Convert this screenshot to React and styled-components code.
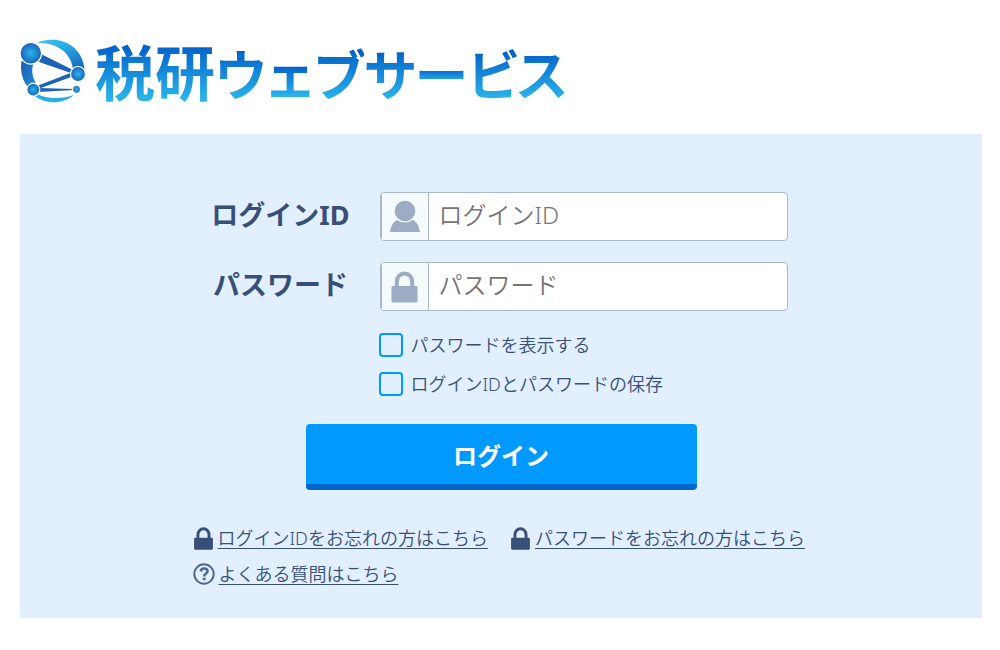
import React, { useState } from 'react';
import styled, { createGlobalStyle } from 'styled-components';

const GlobalStyle = createGlobalStyle`
  * {
    box-sizing: border-box;
  }

  body {
    margin: 0;
    background: #fff;
    color: #384f77;
    font-family: 'Noto Sans', 'Noto Sans CJK JP', sans-serif;
    font-size: 18px;
    font-weight: 350;
  }
`;

const Page = styled.div`
  padding: 32px 18px 32px 20px;
`;

const Header = styled.header`
  display: flex;
  align-items: center;
  gap: 9px;
  height: 78px;
  margin-bottom: 24px;
`;

const LogoText = styled.h1`
  margin: 0;
  font-family: 'Noto Sans CJK JP', sans-serif;
  font-size: 60px;
  font-weight: 700;
  line-height: 76px;
  font-feature-settings: 'palt';
  white-space: nowrap;
`;

const LogoChar = styled.span`
  font-size: ${(p) => (p.$kana ? 54 : 60)}px;
  color: transparent;
  background: linear-gradient(#0360c8 ${(p) => p.$from}%, #2ab4ea ${(p) => p.$to}%);
  background-clip: text;
  -webkit-background-clip: text;
`;

const Panel = styled.main`
  padding: 58px 20px 32px;
  background: #e1efff;
`;

const Fields = styled.div`
  display: grid;
  grid-template-columns: 140px 408px;
  gap: 21px 29px;
  align-items: center;
  max-width: 581px;
  margin: 0 auto;
`;

const FieldLabel = styled.label`
  padding-bottom: 4px;
  font-size: 27px;
  font-weight: 700;
  line-height: 40px;
  text-align: center;
  white-space: nowrap;
`;

const InputBox = styled.div`
  display: flex;
  height: 49px;
  border: 1px solid #a9b7d3;
  border-radius: 4px;
  background: #fff;
  overflow: hidden;
`;

const InputIcon = styled.span`
  display: flex;
  align-items: center;
  justify-content: center;
  flex: 0 0 48px;
  border: 1px solid #a9b7d3;
  border-width: 0 1px 0 1px;
  background: #f5faff;
`;

const Input = styled.input`
  flex: 1;
  min-width: 0;
  padding: 0 10px 4px;
  border: 0;
  outline: 0;
  background: transparent;
  color: #384f77;
  font-family: inherit;
  font-size: 24px;
  font-weight: inherit;

  &::placeholder {
    color: #757575;
    opacity: 1;
  }
`;

const Checks = styled.div`
  grid-column: 2;
  display: flex;
  flex-direction: column;
  gap: 15px;
  margin: 1px 0 0 -1px;
`;

const CheckLabel = styled.label`
  display: flex;
  align-items: center;
  gap: 8px;
  height: 24px;
  line-height: 24px;
`;

const Checkbox = styled.input`
  appearance: none;
  width: 24px;
  height: 24px;
  margin: 0;
  border: 2px solid #0099ff;
  border-radius: 4px;

  &:checked {
    background: #0099ff;
  }
`;

const LoginButton = styled.button`
  display: block;
  width: 100%;
  max-width: 391px;
  height: 66px;
  margin: 28px auto 0;
  padding: 0;
  border: 0;
  border-bottom: 6px solid #0066cc;
  border-radius: 4px;
  background: #0099ff;
  color: #fff;
  font-family: inherit;
  font-size: 24px;
  font-weight: 700;
`;

const Links = styled.div`
  display: flex;
  flex-wrap: wrap;
  gap: 12px 22px;
  max-width: 617px;
  margin: 36px auto 0;
`;

const LinkItem = styled.div`
  display: flex;
  align-items: center;
  gap: 4px;
  height: 24px;
`;

const TextLink = styled.a`
  color: #384f77;
  line-height: 24px;
  text-decoration: underline;
  text-decoration-thickness: 1px;
  text-underline-offset: 3px;
  white-space: nowrap;
`;

// each glyph carries its own gradient range
const logoChars = [
  ['税', 22, 84],
  ['研', 22, 84],
  ['ウ', 22, 84],
  ['ェ', 42, 80],
  ['ブ', 22, 84],
  ['サ', 22, 84],
  ['ー', 45, 62],
  ['ビ', 22, 84],
  ['ス', 22, 84],
];

function LogoMark() {
  return (
    <svg width="66" height="66" viewBox="0 0 66 66" aria-hidden="true">
      <defs>
        <radialGradient id="ball">
          <stop offset="0" stopColor="#27b4ea" />
          <stop offset="1" stopColor="#1a62b8" />
        </radialGradient>
        <linearGradient id="arc" x1="0" y1="0" x2="1" y2="1">
          <stop offset="0" stopColor="#38c4ef" />
          <stop offset="0.4" stopColor="#27aee8" />
          <stop offset="1" stopColor="#1a5fb5" />
        </linearGradient>
        <linearGradient id="side" x1="0" y1="0" x2="1" y2="1">
          <stop offset="0" stopColor="#1a5fb5" />
          <stop offset="1" stopColor="#2389d2" />
        </linearGradient>
      </defs>
      <path d="M17 5C37-4 62 6 64.500 31L53 31C51 15 37 4 17 5Z" fill="url(#arc)" />
      <path d="M1.500 23C0 32 2 41 7 48L16 45C12 39 11 31 14 24Z" fill="url(#side)" />
      <path d="M17 56C27 61 42 61 54 57C42 67 25 66 15 58Z" fill="#29ade4" />
      <path d="M21 16L53 32L51 35L19 24Z" fill="#1b62b8" />
      <path d="M17 48L53 34L54 38L18 51Z" fill="#1b62b8" />
      <path d="M18 50L54 51V52L18 54Z" fill="#1b62b8" />
      <g fill="url(#ball)" stroke="#fff" strokeWidth="1.200">
        <circle cx="10.800" cy="15.300" r="10.800" />
        <circle cx="58" cy="36" r="7.500" />
        <circle cx="13.300" cy="51.700" r="6.500" />
        <circle cx="56.500" cy="51.300" r="4" />
      </g>
    </svg>
  );
}

function UserIcon() {
  return (
    <svg width="32" height="34" viewBox="0 1 32 34" fill="#9dabc4" aria-hidden="true">
      <circle cx="16" cy="12" r="10.300" />
      <path d="M1 33C2 27 4 23 8 21Q16 26 24 21C28 23 30 27 31 33Z" />
    </svg>
  );
}

function LockIcon({ width, height, color }) {
  return (
    <svg width={width} height={height} viewBox="0 0 28 33" aria-hidden="true">
      <path d="M6 17V11a8 8.500 0 0 1 16 0v6" fill="none" stroke={color} strokeWidth="4.200" />
      <rect x="0.500" y="15.500" width="27" height="17" rx="1.500" fill={color} />
    </svg>
  );
}

function HelpIcon() {
  return (
    <svg width="22" height="22" viewBox="0 0 22 22" fill="none" stroke="#50678e" aria-hidden="true">
      <circle cx="11" cy="11" r="9.700" strokeWidth="2" />
      <path d="M7.700 8.500Q8 5.500 11.200 5.500Q14.500 5.500 14.500 8.200Q14.500 9.800 12.500 11Q11.200 11.900 11.200 13.500" strokeWidth="2.600" />
      <path d="M11.200 14.800V17.200" strokeWidth="2.800" />
    </svg>
  );
}

function App() {
  const [visible, setVisible] = useState(false);

  return (
    <>
      <GlobalStyle />
      <Page>
        <Header>
          <LogoMark />
          <LogoText>
            {logoChars.map(([char, from, to], i) => (
              <LogoChar key={char} $kana={i > 1} $from={from} $to={to}>{char}</LogoChar>
            ))}
          </LogoText>
        </Header>
        <Panel>
          <form onSubmit={(e) => e.preventDefault()}>
            <Fields>
              <FieldLabel htmlFor="login-id">ログインID</FieldLabel>
              <InputBox>
                <InputIcon><UserIcon /></InputIcon>
                <Input id="login-id" type="text" placeholder="ログインID" />
              </InputBox>
              <FieldLabel htmlFor="password">パスワード</FieldLabel>
              <InputBox>
                <InputIcon><LockIcon width={27} height={32} color="#9dabc4" /></InputIcon>
                <Input id="password" type={visible ? 'text' : 'password'} placeholder="パスワード" />
              </InputBox>
              <Checks>
                <CheckLabel>
                  <Checkbox type="checkbox" checked={visible} onChange={(e) => setVisible(e.target.checked)} />
                  パスワードを表示する
                </CheckLabel>
                <CheckLabel>
                  <Checkbox type="checkbox" />
                  ログインIDとパスワードの保存
                </CheckLabel>
              </Checks>
            </Fields>
            <LoginButton type="submit">ログイン</LoginButton>
          </form>
          <Links>
            <LinkItem>
              <LockIcon width={21} height={23} color="#384f77" />
              <TextLink href="#forgot-id">ログインIDをお忘れの方はこちら</TextLink>
            </LinkItem>
            <LinkItem>
              <LockIcon width={21} height={23} color="#384f77" />
              <TextLink href="#forgot-password">パスワードをお忘れの方はこちら</TextLink>
            </LinkItem>
            <LinkItem>
              <HelpIcon />
              <TextLink href="#faq">よくある質問はこちら</TextLink>
            </LinkItem>
          </Links>
        </Panel>
      </Page>
    </>
  );
}

export default App;
